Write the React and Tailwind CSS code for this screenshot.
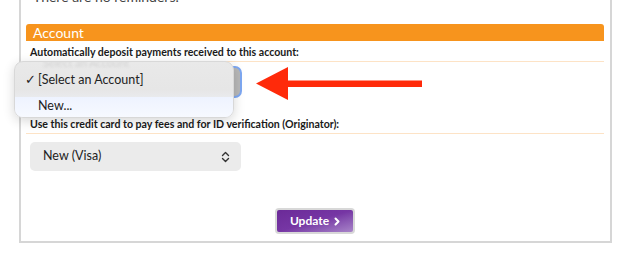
import React from "react";

const Chevrons = () => (
  <svg width="9" height="12" viewBox="0 0 9 12" fill="none" stroke="#333" strokeWidth="1.4" strokeLinecap="round" strokeLinejoin="round">
    <path d="M1.5 4.5 L4.5 1.5 L7.5 4.5" />
    <path d="M1.5 7.5 L4.5 10.5 L7.5 7.5" />
  </svg>
);

const Arrow = () => (
  <svg className="absolute left-[256px] top-[67px]" width="167" height="33" viewBox="0 0 167 33">
    <polygon points="0,16.5 32,0 32,33" fill="#ff2a0a" />
    <rect x="30" y="13.5" width="136" height="6.5" fill="#ff2a0a" />
  </svg>
);

export default function App() {
  return (
    <div className="relative w-[623px] h-[253px] overflow-hidden bg-white font-['Lato',sans-serif] text-[#222]">
      <div className="ml-[19px] -mt-[20px] h-[263px] w-[593px] border-x-2 border-b-2 border-[#d6d6d6] pl-[5px] pr-[6px]">
        <p className="pt-[9px] pl-[7px] text-[14px] leading-[15px] text-[#444]">There are no reminders.</p>

        <div className="mt-[20px] h-[17px] rounded-t-[3px] bg-[#f7941d] pl-[7px] text-[14px] leading-[17px] text-white">
          Account
        </div>

        <div className="mt-[5px] border-b border-[#fde3c6] pb-[3px] pl-[4px] text-[10.6px] font-bold leading-[12px] text-[#1a1a1a]">
          Automatically deposit payments received to this account:
        </div>

        <div className="ml-[4px] mt-[4px] h-[32px] w-[212px] rounded-[7px] border-2 border-[#7ea8f2] bg-[#b8b8b8]" />

        <div className="mt-[20px] border-b border-[#fde3c6] pb-[3px] pl-[4px] text-[10.6px] font-bold leading-[12px] text-[#1a1a1a]">
          Use this credit card to pay fees and for ID verification (Originator):
        </div>

        <div className="ml-[4px] mt-[8px] flex h-[29px] w-[211px] items-center justify-between rounded-[5px] bg-[#ebebeb] pl-[13px] pr-[11px] text-[12.5px]">
          <span>New (Visa)</span>
          <Chevrons />
        </div>

        <div className="mt-[37px] flex justify-center">
          <button className="flex h-[26px] w-[80px] items-center justify-center gap-[5px] rounded-[4px] border-2 border-[#d8d8d8] bg-gradient-to-br from-[#6b2a98] via-[#7636a4] to-[#a884c8] text-[12px] font-bold text-white">
            Update
            <svg width="6" height="9" viewBox="0 0 6 9" fill="none" stroke="white" strokeWidth="2" strokeLinecap="round" strokeLinejoin="round">
              <path d="M1.5 1.5 L4.5 4.5 L1.5 7.5" />
            </svg>
          </button>
        </div>
      </div>

      <div className="absolute left-[14px] top-[61px] h-[57px] w-[220px] overflow-hidden rounded-[9px] border border-[#d8d8d8] bg-gradient-to-b from-[#e9e9e9] via-[#e6e6e6] to-[#f2f6ff] shadow-[0_3px_12px_rgba(0,0,0,0.16)]">
        <div className="-mt-[3px] pl-[28px] text-[11px] leading-[8px] text-[#d4d4d4] blur-[1px]">Select an Account</div>
        <div className="flex h-[24px] items-center pl-[10px] pt-[2px] text-[12.5px] leading-[14px]">
          <span className="w-[13px] font-['DejaVu_Sans'] text-[13px] font-bold">✓</span>
          <span>[Select an Account]</span>
        </div>
        <div className="mt-[6px] h-[23px] bg-gradient-to-b from-[#eef3ff] to-[#f8faff] pl-[23px] text-[12.5px] leading-[18px]">
          New...
        </div>
      </div>

      <Arrow />
    </div>
  );
}
